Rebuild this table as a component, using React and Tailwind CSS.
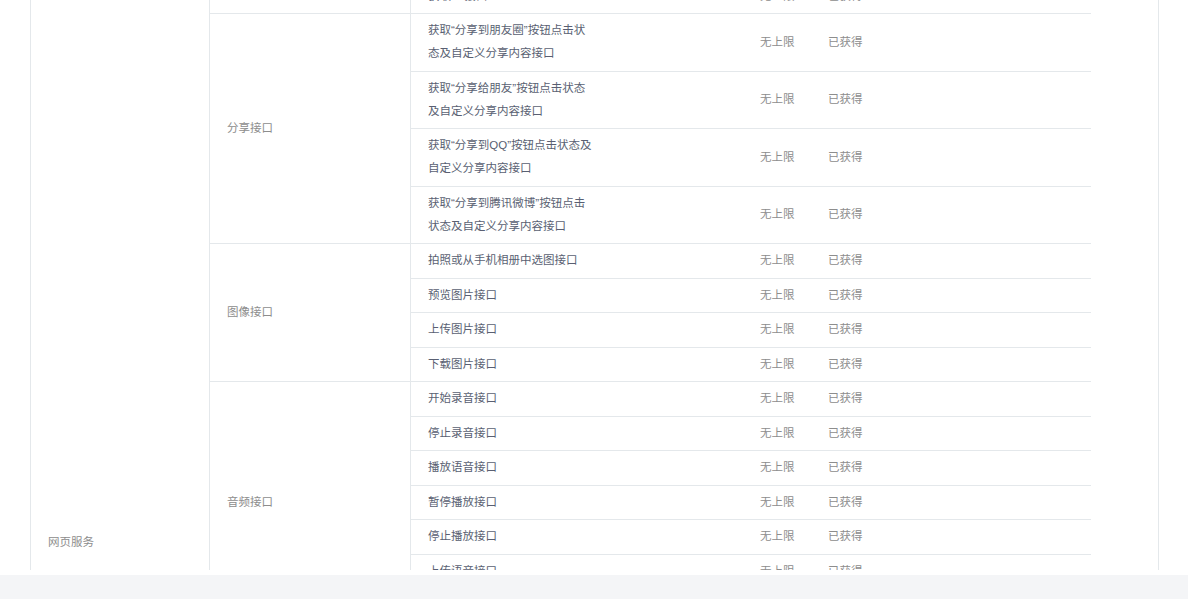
const GROUPS = [
  { name: '基础接口', apis: ['判断当前客户端版本是否支持指定JS接口', '获取JS接口'] },
  {
    name: '分享接口',
    apis: [
      '获取“分享到朋友圈”按钮点击状态及自定义分享内容接口',
      '获取“分享给朋友”按钮点击状态及自定义分享内容接口',
      '获取“分享到QQ”按钮点击状态及自定义分享内容接口',
      '获取“分享到腾讯微博”按钮点击状态及自定义分享内容接口',
    ],
  },
  {
    name: '图像接口',
    apis: ['拍照或从手机相册中选图接口', '预览图片接口', '上传图片接口', '下载图片接口'],
  },
  {
    name: '音频接口',
    apis: [
      '开始录音接口',
      '停止录音接口',
      '播放语音接口',
      '暂停播放接口',
      '停止播放接口',
      '上传语音接口',
      '下载语音接口',
    ],
  },
  { name: '智能接口', apis: ['识别音频并返回识别结果接口'] },
  { name: '设备信息', apis: ['获取网络状态接口'] },
  { name: '地理位置', apis: ['使用微信内置地图查看地理位置接口', '获取地理位置接口'] },
  {
    name: '界面操作',
    apis: [
      '隐藏右上角菜单接口',
      '显示右上角菜单接口',
      '关闭当前网页窗口接口',
      '批量隐藏功能按钮接口',
      '批量显示功能按钮接口',
      '隐藏所有非基础按钮接口',
      '显示所有功能按钮接口',
    ],
  },
  { name: '微信扫一扫', apis: ['调起微信扫一扫接口'] },
  { name: '微信小店', apis: ['跳转微信商品页接口'] },
  { name: '微信卡券', apis: ['批量添加卡券接口', '查看微信卡包中的卡券接口'] },
];

function ApiRow({ name, last }) {
  return (
    <div className={`flex ${last ? '' : 'border-b border-[#e4e8eb]'}`}>
      <div className="w-[349px] shrink-0 pl-[17px] py-[5.25px]">
        <div className="w-[166px] leading-[23px] text-[#595f72]">{name}</div>
      </div>
      <div className="w-[68px] shrink-0 flex items-center text-[#8d8d8d]">无上限</div>
      <div className="flex-1 flex items-center text-[#8d8d8d]">已获得</div>
    </div>
  );
}

function Group({ group }) {
  return (
    <div className="flex border-b border-[#e4e8eb]">
      <div className="w-[201px] shrink-0 border-r border-[#e4e8eb] pl-[17px] flex items-center text-[#8d8d8d]">
        {group.name}
      </div>
      <div className="flex-1 flex flex-col">
        {group.apis.map((api, i) => (
          <ApiRow key={api} name={api} last={i === group.apis.length - 1} />
        ))}
      </div>
    </div>
  );
}

export default function App() {
  return (
    <div
      className="w-[1188px] h-[599px] bg-white overflow-hidden flex flex-col text-[11.5px]"
      style={{ fontFamily: '"Liberation Sans", Arial, "Noto Sans CJK SC", sans-serif' }}
    >
      {/* Scrolled permission table */}
      <div className="ml-[30px] w-[1129px] h-[570px] shrink-0 overflow-hidden border-l border-r border-[#e4e8eb]">
        <div className="-mt-[78px] flex w-[1060px]">
          <div className="w-[179px] shrink-0 border-r border-[#e4e8eb] pl-[17px] flex items-center text-[#8d8d8d]">
            网页服务
          </div>
          <div className="flex-1 flex flex-col">
            {GROUPS.map(g => (
              <Group key={g.name} group={g} />
            ))}
          </div>
        </div>
      </div>
      <div className="h-[5px] shrink-0" />
      <div className="flex-1 bg-[#f4f5f7]" />
    </div>
  );
}
